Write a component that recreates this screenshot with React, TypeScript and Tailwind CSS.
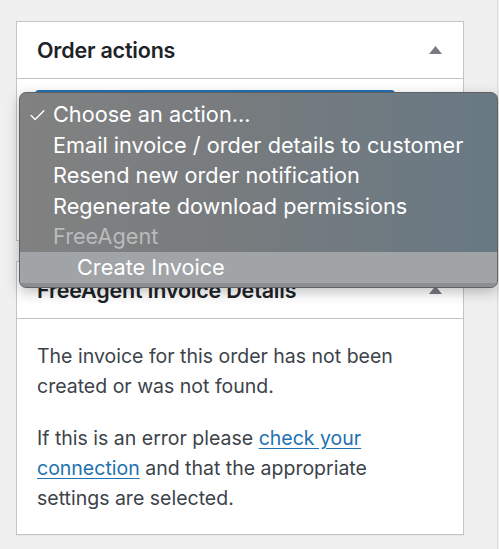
import { Check } from "lucide-react";

const font = { fontFamily: "Inter, 'Noto Sans', 'Liberation Sans', sans-serif" };

function Caret() {
  return (
    <svg width="13" height="8" viewBox="0 0 13 8" className="shrink-0">
      <polygon points="6.5,0 13,8 0,8" fill="#787c82" />
    </svg>
  );
}

function PanelHeader({ title }: { title: string }) {
  return (
    <div className="h-[57px] flex items-center justify-between pl-[20px] pr-[21px] border-b border-[#c3c4c7]">
      <h2 className="text-[21.5px] font-semibold text-[#1d2327] tracking-[-0.2px]">
        {title}
      </h2>
      <Caret />
    </div>
  );
}

const options = [
  "Email invoice / order details to customer",
  "Resend new order notification",
  "Regenerate download permissions",
];

function ActionMenu() {
  return (
    <div className="absolute left-[19px] top-[92px] w-[479px] h-[196px] rounded-[7px] border border-[#5f6264] overflow-hidden shadow-[0_4px_14px_rgba(0,0,0,0.25)] bg-gradient-to-r from-[#818181] via-[#767b7e] to-[#687984] text-white text-[21.7px] leading-[30.6px]">
      <div className="pt-[6px]">
        <div className="relative pl-[33px]">
          <Check
            className="absolute left-[8px] top-[7px] w-[19px] h-[19px]"
            strokeWidth={1.8}
          />
          Choose an action...
        </div>
        {options.map((o) => (
          <div key={o} className="pl-[33px]">
            {o}
          </div>
        ))}
        <div className="pl-[33px] text-[#b9bbbc]">FreeAgent</div>
        <div className="pl-[57px] bg-[#a0a4a7]">Create Invoice</div>
        <div className="h-[7px] bg-[#8b8f91]" />
      </div>
    </div>
  );
}

export default function App() {
  return (
    <div
      className="relative w-[499px] h-[549px] bg-[#f0f0f1] overflow-hidden"
      style={font}
    >
      <div className="w-[498px] h-[549px] border-r border-[#dcdcde] pt-[21px] pl-[16px]">
        {/* Order actions */}
        <div className="w-[448px] bg-white border border-[#c3c4c7]">
          <PanelHeader title="Order actions" />
          <div className="h-[161px] pt-[11px] pl-[18px]">
            <div className="w-[360px] h-[32px] rounded-[4px] border-2 border-[#2271b1] bg-[#2271b1]" />
          </div>
        </div>

        {/* FreeAgent Invoice Details */}
        <div className="w-[448px] mt-[20px] bg-white border border-[#c3c4c7] shadow-[0_1px_1px_rgba(0,0,0,0.04)]">
          <PanelHeader title="FreeAgent Invoice Details" />
          <div className="pl-[20px] pr-[46px] pt-[22px] pb-[21px] text-[19.5px] leading-[30px] text-[#3c434a]">
            <p>The invoice for this order has not been created or was not found.</p>
            <p className="mt-[22px]">
              If this is an error please{" "}
              <a href="#" className="text-[#2271b1] underline underline-offset-[3px]">
                check your connection
              </a>{" "}
              and that the appropriate settings are selected.
            </p>
          </div>
        </div>
      </div>

      <ActionMenu />
    </div>
  );
}
